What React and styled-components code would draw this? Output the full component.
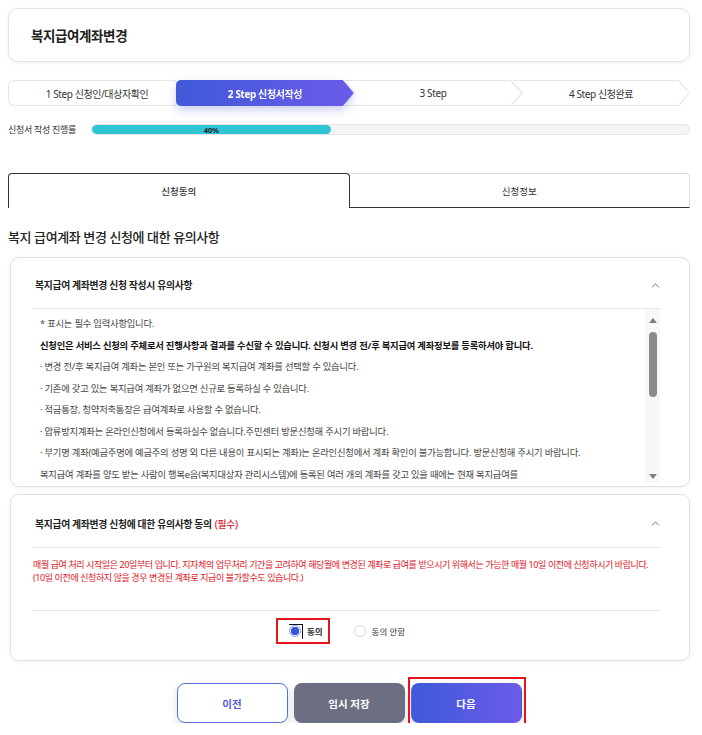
import styled, { createGlobalStyle } from "styled-components";
import { ChevronUp } from "lucide-react";

const GlobalStyle = createGlobalStyle`
    body {
        margin: 0;
        background: #fff;
        font-family: "Noto Sans", "Noto Sans CJK KR", sans-serif;
        color: #222;
    }
`;

const Page = styled.div`
    width: 682px;
    padding: 8px 0 0 8px;
    display: flex;
    flex-direction: column;
`;

const HeaderCard = styled.div`
    height: 52px;
    border: 1px solid #e2e2e2;
    border-radius: 10px;
    box-shadow: 0 1px 4px rgba(0, 0, 0, 0.06);
    display: flex;
    align-items: center;
    padding-left: 22px;
`;

const PageTitle = styled.h1`
    margin: 0;
    font-size: 13.5px;
    font-weight: 700;
    letter-spacing: -0.4px;
    color: #222;
`;

const Steps = styled.div`
    display: flex;
    margin-top: 18px;
    height: 26px;
`;

const arrowClip = "polygon(0 0, calc(100% - 11px) 0, 100% 50%, calc(100% - 11px) 100%, 0 100%)";
const notchClip = "polygon(0 0, calc(100% - 11px) 0, 100% 50%, calc(100% - 11px) 100%, 0 100%, 10px 50%)";

const Step = styled.div`
    flex: 1;
    margin-left: ${p => (p.first ? "0" : "-10px")};
    z-index: ${p => (p.active ? 3 : 1)};
    filter: ${p => (p.active ? "drop-shadow(0 4px 5px rgba(70, 80, 200, 0.28))" : "none")};
`;

const StepEdge = styled.div`
    height: 100%;
    box-sizing: border-box;
    padding: ${p => (p.active ? "0" : "1px")};
    background: ${p => (p.active ? "transparent" : "#e6e6e6")};
    border-radius: ${p => (p.rounded ? "6px 0 0 6px" : "0")};
    clip-path: ${p => (p.rounded ? arrowClip : notchClip)};
`;

const StepFace = styled.div`
    height: 100%;
    display: flex;
    align-items: center;
    justify-content: center;
    font-size: 10px;
    letter-spacing: -0.4px;
    font-weight: ${p => (p.active ? 700 : 400)};
    color: ${p => (p.active ? "#fff" : "#333")};
    background: ${p => (p.active ? "linear-gradient(90deg, #3f5ad8, #6c5be8)" : "#fff")};
    border-radius: ${p => (p.rounded ? "5px 0 0 5px" : "0")};
    clip-path: ${p => (p.rounded ? arrowClip : notchClip)};
`;

const ProgressRow = styled.div`
    display: flex;
    align-items: center;
    margin-top: 17px;
`;

const ProgressLabel = styled.span`
    width: 83px;
    font-size: 9px;
    color: #333;
    letter-spacing: -0.3px;
`;

const ProgressTrack = styled.div`
    flex: 1;
    height: 9px;
    border: 1px solid #e4e4e4;
    border-radius: 6px;
    background: #f5f5f5;
    overflow: hidden;
`;

const ProgressFill = styled.div`
    height: 100%;
    border-radius: 6px;
    background: #2fc5d4;
    display: flex;
    align-items: center;
    justify-content: center;
    font-size: 7.5px;
    font-weight: 700;
    color: #222;
`;

const Tabs = styled.div`
    display: flex;
    margin-top: 37px;
    height: 35px;
`;

const Tab = styled.div`
    flex: 1;
    display: flex;
    align-items: center;
    justify-content: center;
    font-size: 9.5px;
    color: #333;
    font-weight: ${p => (p.active ? 500 : 400)};
    border: 1px solid ${p => (p.active ? "#333" : "#ddd")};
    border-bottom: ${p => (p.active ? "none" : "1px solid #333")};
    border-left: ${p => (p.active ? "1px solid #333" : "none")};
    border-radius: ${p => (p.active ? "4px 4px 0 0" : "0 4px 0 0")};
`;

const SectionTitle = styled.h2`
    margin: 19px 0 0;
    font-size: 13px;
    font-weight: 500;
    color: #222;
    letter-spacing: -0.4px;
`;

const Card = styled.div`
    margin: ${p => p.margin || "0"};
    margin-left: 2px;
    border: 1px solid #e0e0e0;
    border-radius: 9px;
    box-shadow: 0 1px 4px rgba(0, 0, 0, 0.06);
    padding: 0 29px 0 22px;
`;

const CardHead = styled.div`
    height: ${p => (p.tall ? "53px" : "51px")};
    box-sizing: border-box;
    padding: ${p => (p.tall ? "5px 0 0 2px" : "4px 0 0 2px")};
    display: flex;
    align-items: center;
    justify-content: space-between;
    border-bottom: 1px solid #e6e6e6;
    font-size: 9.8px;
    font-weight: 700;
    color: #222;
    letter-spacing: -0.3px;

    svg {
        margin-right: -2px;
        color: #555;
    }
`;

const Required = styled.span`
    color: #e0141e;
    font-weight: 500;
    margin-left: 3px;
`;

const ScrollArea = styled.div`
    height: 174px;
    display: flex;
    margin-bottom: 3px;
`;

const ScrollContent = styled.div`
    flex: 1;
    overflow: hidden;
    padding: 4px 0 0 7px;
    font-size: 9.3px;
    color: #333;
    letter-spacing: -0.2px;
`;

const ScrollRail = styled.div`
    width: 15px;
    background: #f8f8f8;
    display: flex;
    flex-direction: column;
    align-items: center;
    padding: 9px 0 4px;
    box-sizing: border-box;
`;

const RailArrow = styled.span`
    width: 0;
    height: 0;
    border-left: 4px solid transparent;
    border-right: 4px solid transparent;
    border-bottom: ${p => (p.down ? "none" : "5px solid #7d7d7d")};
    border-top: ${p => (p.down ? "5px solid #7d7d7d" : "none")};
    margin-top: ${p => (p.down ? "auto" : "0")};
`;

const RailThumb = styled.span`
    width: 8px;
    height: 65px;
    margin-top: 9px;
    border-radius: 4px;
    background: #8a8a8a;
`;

const NoteLine = styled.p`
    margin: 0;
    line-height: 21.5px;
    white-space: nowrap;
    font-weight: ${p => (p.bold ? 700 : 400)};
    color: ${p => (p.bold ? "#111" : "#444")};
`;

const Warning = styled.div`
    padding: 10px 0 0 0;
    height: 52px;
    border-bottom: 1px solid #e3e3e3;
    font-size: 9px;
    line-height: 13px;
    color: #e0141e;
    letter-spacing: -0.4px;
`;

const RadioRow = styled.div`
    height: 40px;
    display: flex;
    align-items: center;
    justify-content: center;
    gap: 24px;
    margin-bottom: 9px;
    padding-right: 12px;
`;

const RadioLabel = styled.label`
    display: flex;
    align-items: center;
    gap: 6px;
    font-size: 8.5px;
    font-weight: ${p => (p.checked ? 700 : 400)};
    color: #333;
    padding: ${p => (p.marked ? "5px 5px 5px 11px" : "0")};
    border: ${p => (p.marked ? "2px solid #e8141c" : "none")};
`;

const RadioDot = styled.span`
    position: relative;
    width: 12px;
    height: 12px;
    border-radius: 50%;
    box-sizing: border-box;
    border: 1px solid ${p => (p.checked ? "#8aa0ee" : "#d7d7d7")};
    background: ${p => (p.checked ? "radial-gradient(circle, #3a55d6 0 4px, #fff 4.5px)" : "#fff")};

    ${p => p.checked && `
        &::after {
            content: "";
            position: absolute;
            top: -2px;
            left: -1px;
            width: 13px;
            height: 14px;
            border-top: 1px solid #111;
            border-right: 1px solid #111;
        }
    `}
`;

const Buttons = styled.div`
    display: flex;
    justify-content: center;
    gap: 6px;
    margin-top: 22px;
`;

const Button = styled.button`
    position: relative;
    width: 111px;
    height: 40px;
    border-radius: 8px;
    font-family: inherit;
    font-size: 10.5px;
    font-weight: 700;
    cursor: pointer;
    box-shadow: 0 4px 8px rgba(0, 0, 0, 0.12);
    border: 1px solid ${p => (p.variant === "outline" ? "#5670e2" : "transparent")};
    color: ${p => (p.variant === "outline" ? "#4f5bdc" : "#fff")};
    background: ${p => ({
        outline: "#fff",
        gray: "#6c6e81",
        primary: "linear-gradient(90deg, #3f5ad8, #6c5be8)",
    }[p.variant])};

    ${p => p.marked && `
        &::after {
            content: "";
            position: absolute;
            inset: -7px -5px -6px -4px;
            border: 2px solid #e8141c;
        }
    `}
`;

const steps = ["1 Step 신청인/대상자확인", "2 Step 신청서작성", "3 Step", "4 Step 신청완료"];

const notes = [
    { text: "* 표시는 필수 입력사항입니다." },
    { text: "신청인은 서비스 신청의 주체로서 진행사항과 결과를 수신할 수 있습니다. 신청시 변경 전/후 복지급여 계좌정보를 등록하셔야 합니다.", bold: true },
    { text: "· 변경 전/후 복지급여 계좌는 본인 또는 가구원의 복지급여 계좌를 선택할 수 있습니다." },
    { text: "· 기존에 갖고 있는 복지급여 계좌가 없으면 신규로 등록하실 수 있습니다." },
    { text: "· 적금통장, 청약저축통장은 급여계좌로 사용할 수 없습니다." },
    { text: "· 압류방지계좌는 온라인신청에서 등록하실수 없습니다.주민센터 방문신청해 주시기 바랍니다." },
    { text: "· 부기명 계좌(예금주명에 예금주의 성명 외 다른 내용이 표시되는 계좌)는 온라인신청에서 계좌 확인이 불가능합니다. 방문신청해 주시기 바랍니다." },
    { text: "복지급여 계좌를 양도 받는 사람이 행복e음(복지대상자 관리시스템)에 등록된 여러 개의 계좌를 갖고 있을 때에는 현재 복지급여를" },
    { text: "받고 있는 계좌 중에서 선택하여 양도 받을 수 있습니다." },
];

export default function App() {
    return (
        <Page>
            <GlobalStyle />

            <HeaderCard>
                <PageTitle>복지급여계좌변경</PageTitle>
            </HeaderCard>

            <Steps>
                {steps.map((label, i) => (
                    <Step key={label} first={i === 0} active={i === 1}>
                        <StepEdge active={i === 1} rounded={i <= 1}>
                            <StepFace active={i === 1} rounded={i <= 1}>{label}</StepFace>
                        </StepEdge>
                    </Step>
                ))}
            </Steps>

            <ProgressRow>
                <ProgressLabel>신청서 작성 진행률</ProgressLabel>
                <ProgressTrack>
                    <ProgressFill style={{ width: "40%" }}>40%</ProgressFill>
                </ProgressTrack>
            </ProgressRow>

            <Tabs>
                <Tab active>신청동의</Tab>
                <Tab>신청정보</Tab>
            </Tabs>

            <SectionTitle>복지 급여계좌 변경 신청에 대한 유의사항</SectionTitle>

            <Card margin="11px 0 0">
                <CardHead>
                    <span>복지급여 계좌변경 신청 작성시 유의사항</span>
                    <ChevronUp size={13} strokeWidth={1.5} />
                </CardHead>
                <ScrollArea>
                    <ScrollContent>
                        {notes.map((n, i) => (
                            <NoteLine key={i} bold={n.bold}>{n.text}</NoteLine>
                        ))}
                    </ScrollContent>
                    <ScrollRail>
                        <RailArrow />
                        <RailThumb />
                        <RailArrow down />
                    </ScrollRail>
                </ScrollArea>
            </Card>

            <Card margin="7px 0 0">
                <CardHead tall>
                    <span>복지급여 계좌변경 신청에 대한 유의사항 동의<Required>(필수)</Required></span>
                    <ChevronUp size={13} strokeWidth={1.5} />
                </CardHead>
                <Warning>
                    매월 급여 처리 시작일은 20일부터 입니다. 지자체의 업무처리 기간을 고려하여 해당월에 변경된 계좌로 급여를 받으시기 위해서는 가능한 매월 10일 이전에 신청하시기 바랍니다.
                    <br />
                    (10일 이전에 신청하지 않을 경우 변경된 계좌로 지급이 불가할수도 있습니다.)
                </Warning>
                <RadioRow>
                    <RadioLabel checked marked>
                        <RadioDot checked />
                        동의
                    </RadioLabel>
                    <RadioLabel>
                        <RadioDot />
                        동의 안함
                    </RadioLabel>
                </RadioRow>
            </Card>

            <Buttons>
                <Button variant="outline">이전</Button>
                <Button variant="gray">임시 저장</Button>
                <Button variant="primary" marked>다음</Button>
            </Buttons>
        </Page>
    );
}
